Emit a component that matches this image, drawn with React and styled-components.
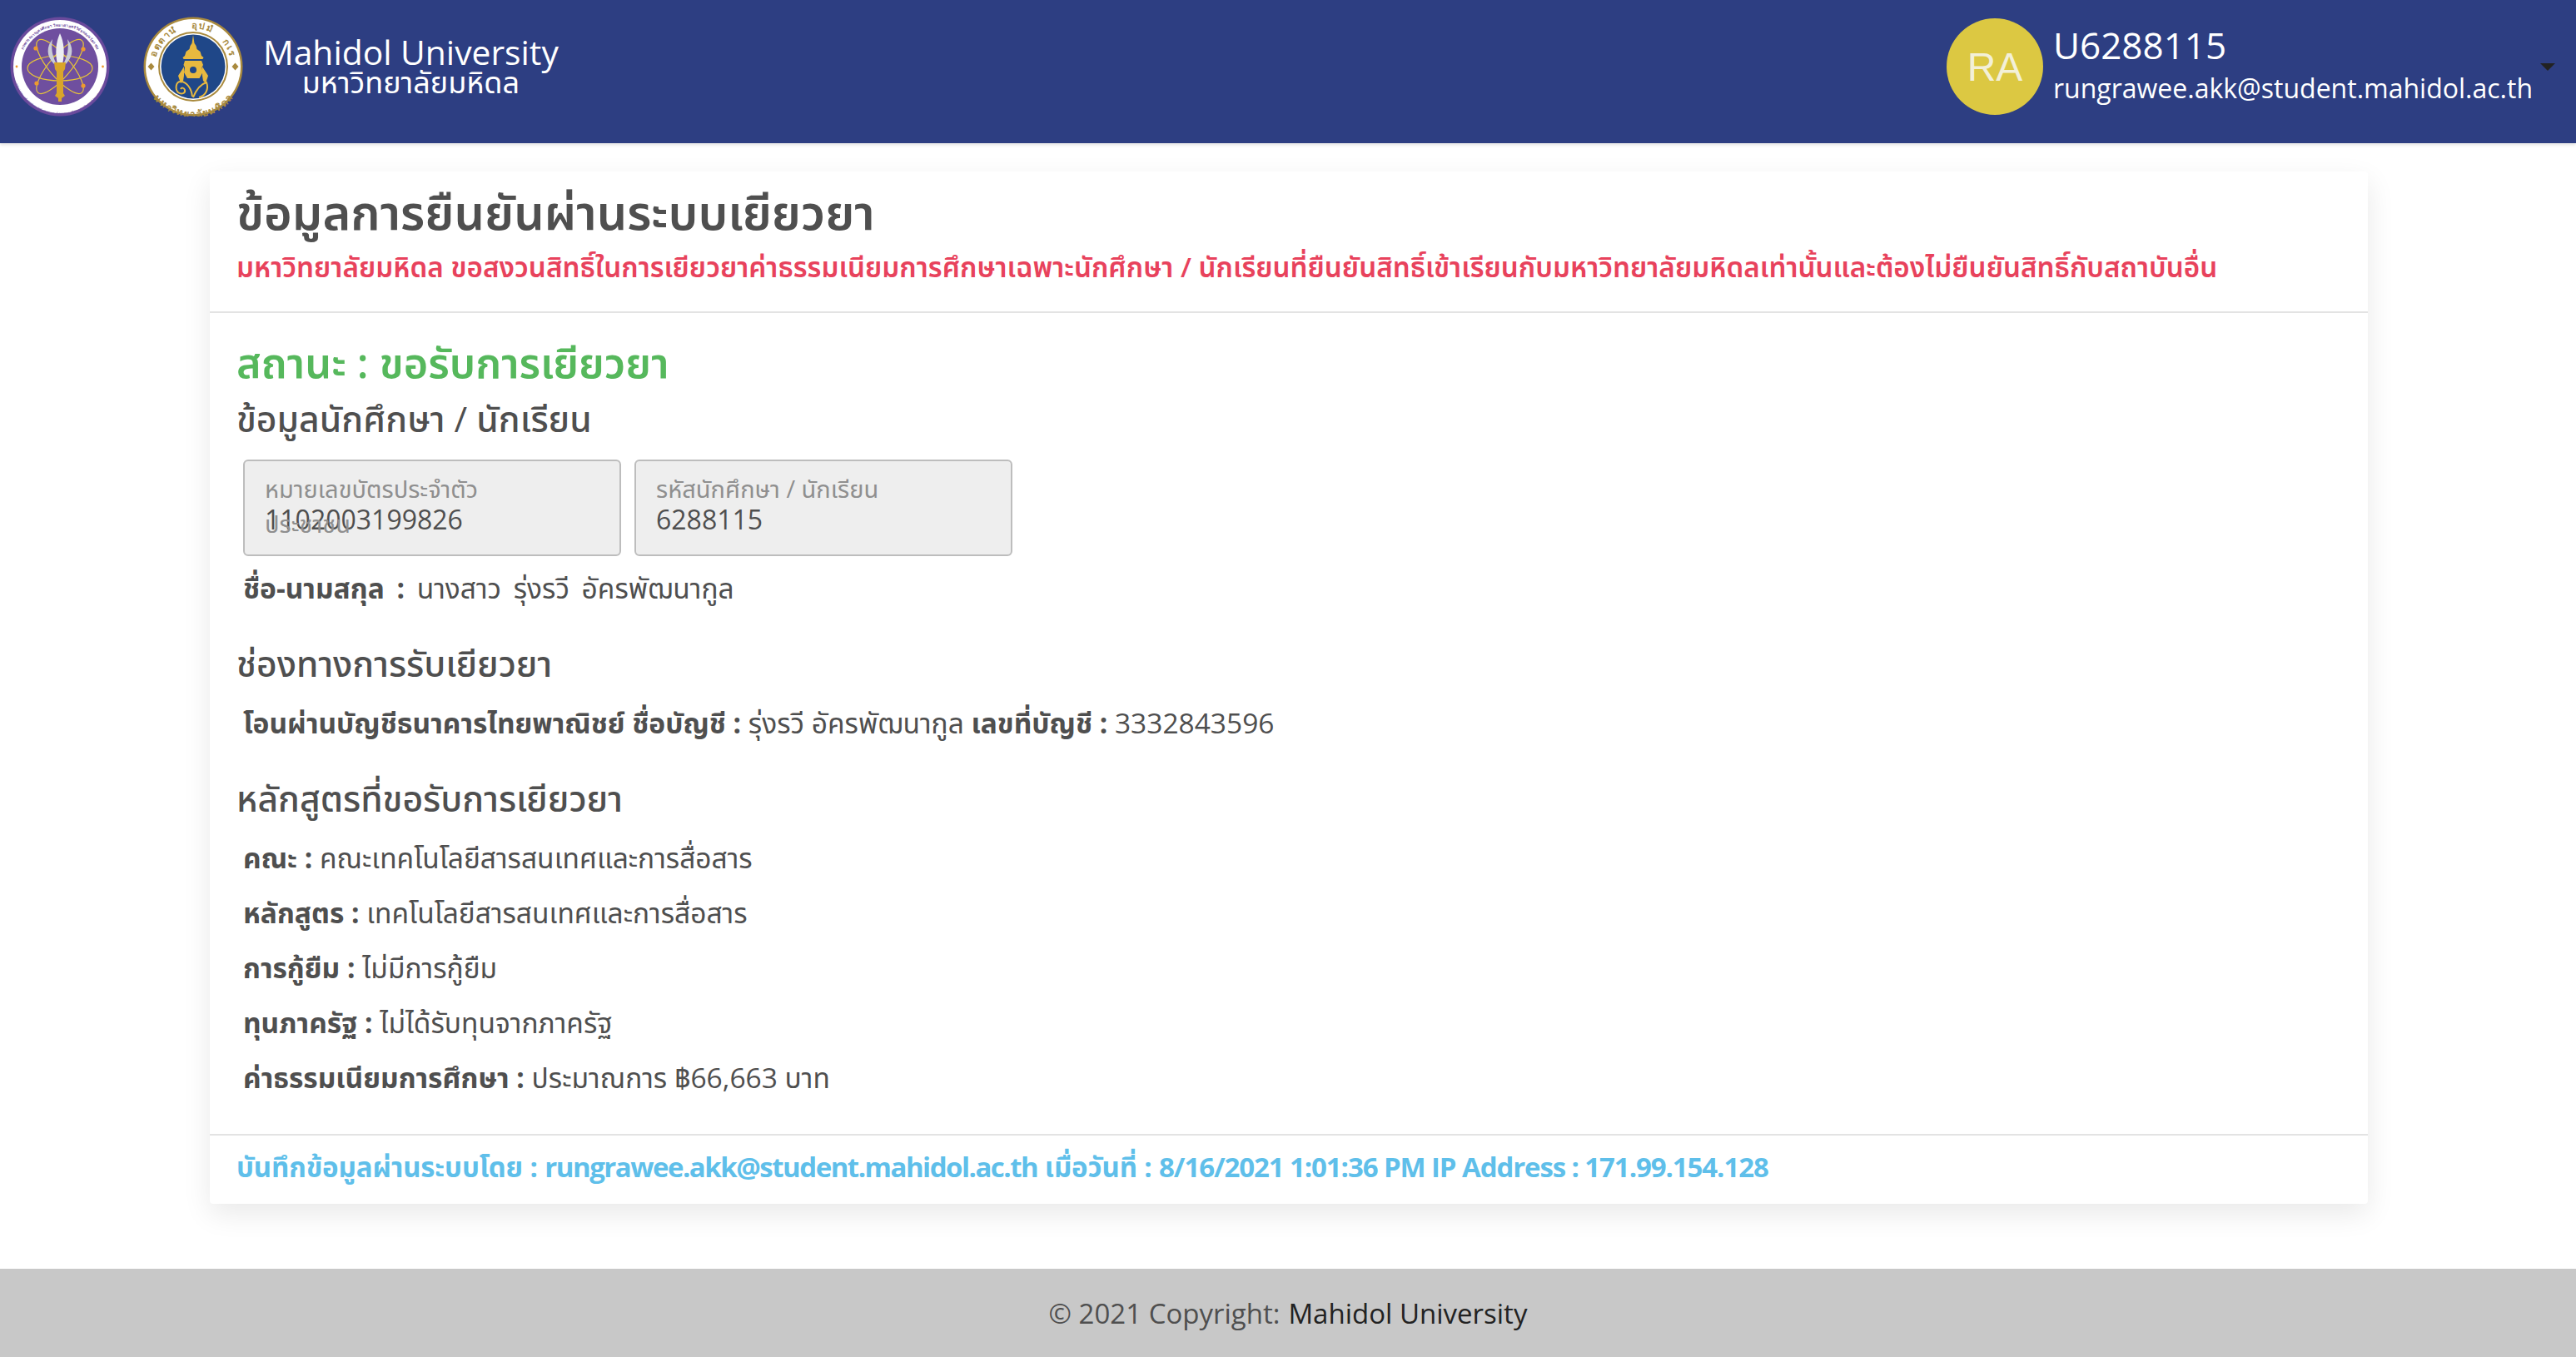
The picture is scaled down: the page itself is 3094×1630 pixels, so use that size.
import React from "react";
import styled, { createGlobalStyle } from "styled-components";

const Global = createGlobalStyle`
  html, body { margin: 0; padding: 0; background: #fff; }
  body { font-family: "Open Sans", "Noto Sans", "Noto Sans Thai", "DejaVu Sans", sans-serif; color: #4f4f4f; }
  * { box-sizing: border-box; }
`;

const Page = styled.div`
  width: 3094px;
  height: 1630px;
  display: flex;
  flex-direction: column;
  overflow: hidden;
`;

const Header = styled.header`
  height: 172px;
  background: #2d3e82;
  display: flex;
  justify-content: space-between;
  align-items: flex-start;
  box-shadow: 0 2px 4px rgba(0, 0, 0, 0.12);
`;

const Brand = styled.div`
  display: flex;
  align-items: center;
  padding: 20px 0 0 12px;
  height: 140px;
`;

const Seal = styled.svg`
  width: 120px;
  height: 120px;
  display: block;
  margin-right: ${(p) => p.$gap}px;
`;

const BrandText = styled.div`
  display: flex;
  flex-direction: column;
  align-items: center;
  color: #fff;
  padding-bottom: 7px;
`;

const BrandEn = styled.div`
  font-size: 40.8px;
  line-height: 44px;
`;

const BrandTh = styled.div`
  font-size: 36px;
  line-height: 30px;
`;

const UserBox = styled.div`
  display: flex;
  position: relative;
  padding: 22px 52px 0 0;
`;

const Avatar = styled.div`
  width: 116px;
  height: 116px;
  border-radius: 50%;
  background: #dcc842;
  color: #f3f0d8;
  font: 48px "Liberation Sans", sans-serif;
  display: flex;
  align-items: center;
  justify-content: center;
  margin-right: 12px;
`;

const UserText = styled.div`
  color: #fff;
  padding-top: 4px;
`;

const UserId = styled.div`
  font-size: 44px;
  line-height: 56px;
`;

const UserMail = styled.div`
  font-size: 32px;
  line-height: 44px;
  margin-top: 2px;
`;

const Caret = styled.span`
  position: absolute;
  right: 25px;
  top: 76px;
  border-left: 9px solid transparent;
  border-right: 9px solid transparent;
  border-top: 9px solid #222;
`;

const Main = styled.main`
  flex: 1;
  padding: 34px 250px 0 252px;
`;

const Card = styled.section`
  height: 1240px;
  background: #fff;
  border-radius: 4px;
  box-shadow: 0 12px 34px rgba(0, 0, 0, 0.09);
  display: flex;
  flex-direction: column;
`;

const CardHead = styled.div`
  height: 170px;
  padding: 10px 32px 0;
  border-bottom: 2px solid #e3e3e3;
`;

const Title = styled.h1`
  margin: 0;
  font-size: 57.6px;
  line-height: 76px;
  font-weight: 600;
  color: #4f4f4f;
`;

const Notice = styled.div`
  font-size: 33.2px;
  line-height: 46px;
  margin-top: 6px;
  font-weight: 600;
  color: #e8425c;
`;

const CardBody = styled.div`
  flex: 1;
  padding: 28px 32px 0;
`;

const Status = styled.h2`
  margin: 0;
  font-size: 50.4px;
  line-height: 62px;
  font-weight: 600;
  color: #56b85c;
`;

const Heading = styled.h3`
  margin: ${(p) => p.$top || 0}px 0 0;
  font-size: 42.6px;
  line-height: 56px;
  font-weight: 500;
  color: #4f4f4f;
`;

const Fields = styled.div`
  display: flex;
  gap: 16px;
  margin: 22px 0 0 8px;
`;

const Field = styled.div`
  position: relative;
  width: 454px;
  height: 116px;
  background: #eee;
  border: 2px solid #bdbdbd;
  border-radius: 6px;
  padding: 16px 24px 0;
`;

const FieldLabel = styled.div`
  font-size: 29px;
  line-height: 34px;
  color: #8f8f8f;
`;

const FieldValue = styled.div`
  font-size: 32px;
  line-height: 40px;
  color: #4f4f4f;
`;

const Ghost = styled.span`
  position: absolute;
  left: 24px;
  top: 58px;
  font-size: 29px;
  line-height: 34px;
  color: #8f8f8f;
`;

const Row = styled.p`
  margin: ${(p) => p.$top || 0}px 0 0 8px;
  font-size: 33.5px;
  line-height: 48px;
  color: #4f4f4f;
  word-spacing: ${(p) => p.$spread || 0}px;
  b { font-weight: 700; }
`;

const CardFoot = styled.div`
  height: 84px;
  border-top: 2px solid #e3e3e3;
  padding: 14px 32px 0;
  font-size: 33px;
  line-height: 48px;
  font-weight: 700;
  letter-spacing: -0.1px;
  color: #5fbfea;
`;

const Tight = styled.span`
  letter-spacing: ${(p) => p.$track}px;
`;

const Footer = styled.footer`
  height: 106px;
  background: #c8c8c8;
  display: flex;
  align-items: center;
  justify-content: center;
  font-size: 33px;
  color: #4f4f4f;
`;

const FooterBrand = styled.span`
  color: #222;
  margin-left: 10px;
`;

const MoheSeal = () => (
  <Seal $gap={40} viewBox="0 0 120 120" aria-hidden="true">
    <defs>
      <path id="moheTop" d="M11.5 60a48.500 48.500 0 0 1 97 0" />
      <path id="moheBottom" d="M6 60a54 54 0 0 0 108 0" />
    </defs>
    <circle cx="60" cy="60" r="59.5" fill="#6a4a9c" />
    <circle cx="60" cy="60" r="56" fill="#fff" />
    <circle cx="60" cy="60" r="46" fill="#6f4f9f" />
    <text fontSize="4.6" fill="#6f4f9f" fontWeight="600" fontFamily="'Open Sans', 'Noto Sans', sans-serif">
      <textPath href="#moheTop" startOffset="50%" textAnchor="middle">กระทรวงการอุดมศึกษา วิทยาศาสตร์ วิจัยและนวัตกรรม</textPath>
    </text>
    <text fontSize="4.4" fill="#6f4f9f" fontFamily="'Open Sans', 'Noto Sans', sans-serif" dominantBaseline="hanging">
      <textPath href="#moheBottom" startOffset="50%" textAnchor="middle">Ministry of Higher Education, Science, Research and Innovation</textPath>
    </text>
    <g fill="none" stroke="#e6c33a" strokeWidth="1.2">
      <ellipse cx="60" cy="62" rx="39" ry="15" />
      <ellipse cx="60" cy="60" rx="41" ry="13" transform="rotate(50 60 60)" />
      <ellipse cx="60" cy="60" rx="41" ry="13" transform="rotate(-50 60 60)" />
    </g>
    <g fill="#ee9a2e">
      <circle cx="31" cy="38" r="2.6" />
      <circle cx="88" cy="39" r="2.6" />
      <circle cx="32" cy="80" r="2.6" />
      <circle cx="88" cy="83" r="2.6" />
      <circle cx="8" cy="60" r="1.4" />
      <circle cx="111.500" cy="60" r="1.4" />
    </g>
    <path d="M60 20c5 11 6 24 3 37h-6c-3-13-2-26 3-37z" fill="#eceef3" />
    <path d="M51 27c-7 9-8 20 2 30l2-2c-4-8-6-17-4-28zM69 27c7 9 8 20-2 30l-2-2c4-8 6-17 4-28z" fill="#c9ccd6" />
    <path d="M53 55h14l-1 8-2 3v26l2 3-4 3v4h-4v-4l-4-3 2-3V66l-2-3z" fill="#d9a52a" />
  </Seal>
);

const MahidolSeal = () => (
  <Seal $gap={24} viewBox="0 0 120 120" aria-hidden="true">
    <defs>
      <path id="muTop" d="M14 60a46 46 0 0 1 92 0" />
      <path id="muBottom" d="M9 60a51 51 0 0 0 102 0" />
    </defs>
    <circle cx="60" cy="60" r="59.500" fill="#a98a3e" />
    <circle cx="60" cy="60" r="57" fill="#fff" />
    <circle cx="60" cy="60" r="42" fill="#a98a3e" />
    <circle cx="60" cy="60" r="40" fill="#fff" />
    <circle cx="60" cy="60" r="38.500" fill="#1f4788" />
    <text fontSize="11" fill="#a98a3e" fontWeight="700" letterSpacing="1.500" wordSpacing="12" fontFamily="'Open Sans', 'Noto Sans', sans-serif">
      <textPath href="#muTop" startOffset="50%" textAnchor="middle">อตฺตานํ อุปมํ กเร</textPath>
    </text>
    <text fontSize="11.5" fill="#a98a3e" fontWeight="700" dominantBaseline="hanging" fontFamily="'Open Sans', 'Noto Sans', sans-serif">
      <textPath href="#muBottom" startOffset="50%" textAnchor="middle">มหาวิทยาลัยมหิดล</textPath>
    </text>
    <path d="M5.500 60l4-4.500 4 4.500-4 4.500zM106.500 60l4-4.500 4 4.500-4 4.500z" fill="#a98a3e" />
    <g fill="#e8b93f">
      <path d="M60 22l-1.500 10-2 3-1 4-4 3-1.500 5-2.500 2 1 2h23l1-2-2.500-2-1.500-5-4-3-1-4-2-3z" />
      <path d="M50 53h20l2 5-1.500 3 1 6-4 7H53l-4-7 1-6-1.500-3z" />
      <path d="M49 60l-7 11 3 9 3-3 1-6zM71 60l7 11-3 9-3-3-1-6z" />
    </g>
    <circle cx="60" cy="64" r="4" fill="#1f4788" />
    <path d="M59 96c-1-10-7-18-14-18-6 0-7 9-3 13 4 3 9 1 8-3-1-3-4-3-5-1M60 97c4-10 9-16 16-18 3 8-1 16-9 18" fill="none" stroke="#e8b93f" strokeWidth="2" />
  </Seal>
);

export default function App() {
  return (
    <Page>
      <Global />
      <Header>
        <Brand>
          <MoheSeal />
          <MahidolSeal />
          <BrandText>
            <BrandEn>Mahidol University</BrandEn>
            <BrandTh>มหาวิทยาลัยมหิดล</BrandTh>
          </BrandText>
        </Brand>
        <UserBox>
          <Avatar>RA</Avatar>
          <UserText>
            <UserId>U6288115</UserId>
            <UserMail>rungrawee.akk@student.mahidol.ac.th</UserMail>
          </UserText>
          <Caret />
        </UserBox>
      </Header>
      <Main>
        <Card>
          <CardHead>
            <Title>ข้อมูลการยืนยันผ่านระบบเยียวยา</Title>
            <Notice>มหาวิทยาลัยมหิดล ขอสงวนสิทธิ์ในการเยียวยาค่าธรรมเนียมการศึกษาเฉพาะนักศึกษา / นักเรียนที่ยืนยันสิทธิ์เข้าเรียนกับมหาวิทยาลัยมหิดลเท่านั้นและต้องไม่ยืนยันสิทธิ์กับสถาบันอื่น</Notice>
          </CardHead>
          <CardBody>
            <Status>สถานะ : ขอรับการเยียวยา</Status>
            <Heading $top={8}>ข้อมูลนักศึกษา / นักเรียน</Heading>
            <Fields>
              <Field>
                <FieldLabel>หมายเลขบัตรประจำตัว</FieldLabel>
                <FieldValue>1102003199826</FieldValue>
                <Ghost>ประชาชน</Ghost>
              </Field>
              <Field>
                <FieldLabel>รหัสนักศึกษา / นักเรียน</FieldLabel>
                <FieldValue>6288115</FieldValue>
              </Field>
            </Fields>
            <Row $top={14} $spread={6}><b>ชื่อ-นามสกุล :</b> นางสาว รุ่งรวี อัครพัฒนากูล</Row>
            <Heading $top={38}>ช่องทางการรับเยียวยา</Heading>
            <Row $top={20}><b>โอนผ่านบัญชีธนาคารไทยพาณิชย์ ชื่อบัญชี :</b> รุ่งรวี อัครพัฒนากูล <b>เลขที่บัญชี :</b> 3332843596</Row>
            <Heading $top={38}>หลักสูตรที่ขอรับการเยียวยา</Heading>
            <Row $top={20}><b>คณะ :</b> คณะเทคโนโลยีสารสนเทศและการสื่อสาร</Row>
            <Row $top={18}><b>หลักสูตร :</b> เทคโนโลยีสารสนเทศและการสื่อสาร</Row>
            <Row $top={18}><b>การกู้ยืม :</b> ไม่มีการกู้ยืม</Row>
            <Row $top={18}><b>ทุนภาครัฐ :</b> ไม่ได้รับทุนจากภาครัฐ</Row>
            <Row $top={18}><b>ค่าธรรมเนียมการศึกษา :</b> ประมาณการ ฿66,663 บาท</Row>
          </CardBody>
          <CardFoot>บันทึกข้อมูลผ่านระบบโดย : <Tight $track={-1.5}>rungrawee.akk@student.mahidol.ac.th</Tight> เมื่อวันที่ : <Tight $track={-1.1}>8/16/2021 1:01:36 PM IP Address : 171.99.154.128</Tight></CardFoot>
        </Card>
      </Main>
      <Footer>© 2021 Copyright: <FooterBrand>Mahidol University</FooterBrand></Footer>
    </Page>
  );
}
